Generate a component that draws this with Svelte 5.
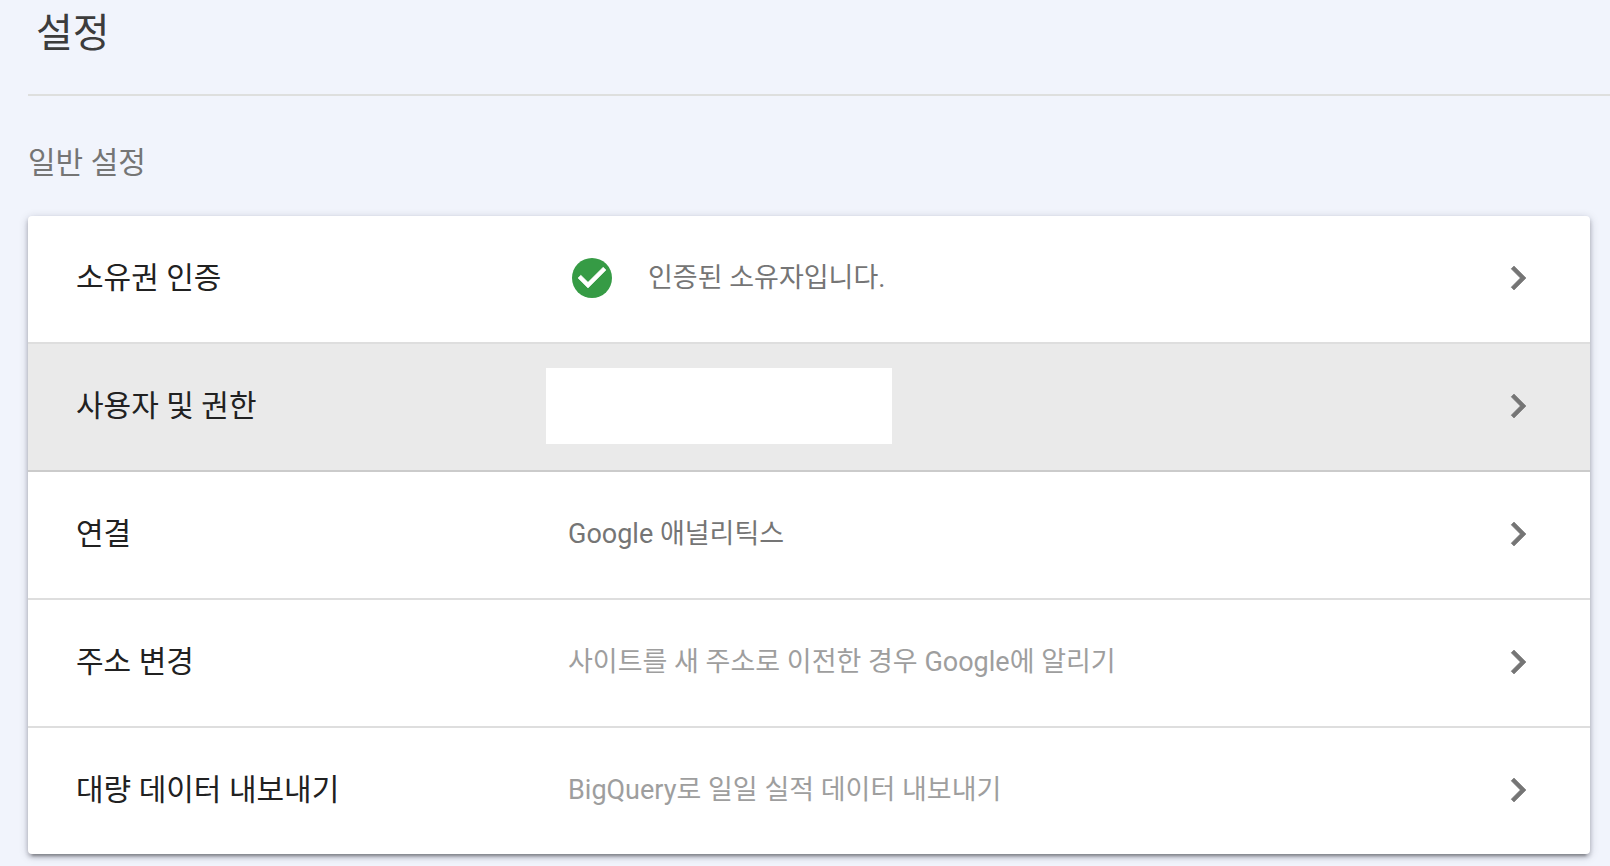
<script lang="ts">
  const rows = [
    { title: '소유권 인증', detail: '인증된 소유자입니다.', kind: 'verified' },
    { title: '사용자 및 권한', detail: '', kind: 'blank' },
    { title: '연결', detail: 'Google 애널리틱스', kind: 'text' },
    { title: '주소 변경', detail: '사이트를 새 주소로 이전한 경우 Google에 알리기', kind: 'muted' },
    { title: '대량 데이터 내보내기', detail: 'BigQuery로 일일 실적 데이터 내보내기', kind: 'muted' }
  ];
</script>

<main>
  <header><h1>설정</h1></header>
  <section>
    <h2>일반 설정</h2>
    <ul>
      {#each rows as row}
        <li class={row.kind}>
          <button type="button">
            <span class="title">{row.title}</span>
            <span class="detail">
              {#if row.kind === 'verified'}
                <svg class="check" viewBox="0 0 24 24" aria-hidden="true">
                  <circle cx="12" cy="12" r="10" fill="#369b45" />
                  <path d="M10 17l-5-5 1.41-1.41L10 14.17l7.59-7.59L19 8z" fill="#fff" stroke="#fff" stroke-width="0.3" />
                </svg>
              {/if}
              {#if row.kind === 'blank'}
                <span class="box"></span>
              {:else}
                <span>{row.detail}</span>
              {/if}
            </span>
            <svg class="chevron" viewBox="0 0 24 24" aria-hidden="true">
              <path d="M10 6L8.59 7.41 13.17 12l-4.58 4.59L10 18l6-6z" fill="#757575" stroke="#757575" stroke-width="0.3" />
            </svg>
          </button>
        </li>
      {/each}
    </ul>
  </section>
</main>

<style>
  :global(body) {
    background: #f1f4fc;
  }
  main {
    font-family: Roboto, "Noto Sans CJK KR", sans-serif;
    padding-left: 28px;
  }
  header {
    padding: 5px 8px 31px;
    border-bottom: 2px solid #dedfde;
  }
  h1 {
    margin: 0;
    font-size: 40px;
    line-height: 58px;
    font-weight: 400;
    color: #3c3c3c;
  }
  section {
    padding: 45px 20px 12px 0;
  }
  h2 {
    margin: 0 0 31px;
    font-size: 30px;
    line-height: 44px;
    font-weight: 400;
    color: #757575;
  }
  ul {
    margin: 0;
    padding: 0;
    list-style: none;
    background: #fff;
    border-radius: 4px;
    overflow: hidden;
    box-shadow:
      0 6px 2px -4px rgba(0, 0, 0, 0.2),
      0 3px 4px rgba(0, 0, 0, 0.22),
      0 2px 10px rgba(0, 0, 40, 0.2);
  }
  li + li {
    border-top: 2px solid #dedede;
  }
  .blank + li {
    border-top-color: #cbcbcb;
  }
  button {
    display: grid;
    grid-template-columns: 492px 1fr 48px;
    align-items: center;
    width: 100%;
    height: 126px;
    padding: 0 48px 2px;
    border: 0;
    background: none;
    font: inherit;
    text-align: left;
    cursor: pointer;
  }
  .blank button {
    background: #eaeaea;
  }
  .title {
    font-size: 30px;
    line-height: 44px;
    color: #212121;
  }
  .detail {
    display: flex;
    align-items: center;
    gap: 32px;
    font-size: 27px;
    line-height: 40px;
    color: #757575;
  }
  .muted .detail {
    color: #9e9e9e;
  }
  .check {
    width: 48px;
    height: 48px;
  }
  .box {
    width: 346px;
    height: 76px;
    margin-left: -22px;
    background: #fff;
  }
  .chevron {
    width: 48px;
    height: 48px;
  }
</style>
